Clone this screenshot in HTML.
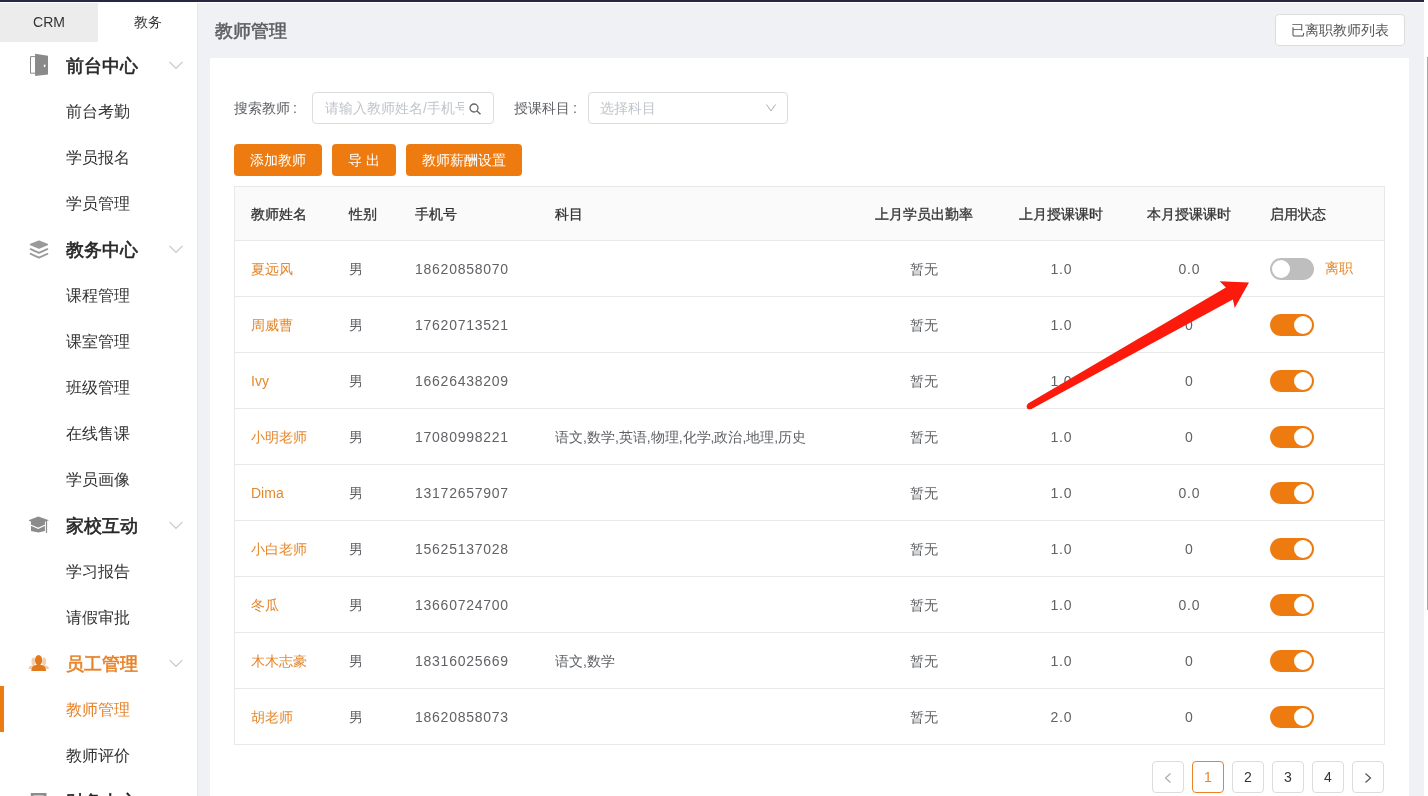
<!DOCTYPE html>
<html><head><meta charset="utf-8"><style>
*{box-sizing:border-box;margin:0;padding:0}
html,body{width:1428px;height:796px;overflow:hidden;background:#f0f1f5;font-family:"Liberation Sans",sans-serif;color:#333}
.a{position:absolute;white-space:nowrap}
.tab{top:3px;height:39px;font-size:14px;line-height:39px;text-align:center}
.grp{left:66px;font-size:18px;font-weight:normal;-webkit-text-stroke:0.6px currentColor;color:#262626;line-height:24px}
.itm{left:66px;font-size:16px;color:#333;line-height:22px}
.hdr{font-size:14px;font-weight:normal;-webkit-text-stroke:0.3px #333;color:#333;line-height:20px;top:204px}
.cell{font-size:14px;color:#606266;line-height:20px}
.nm{color:#e4882e}
.hl{left:235px;width:1149px;height:1px;background:#e8e8e8}
.btn{top:144px;height:32px;background:#ee7b10;border-radius:4px;color:#fff;font-size:14px;line-height:32px;text-align:center}
.tg{left:1270px;width:44px;height:22px;border-radius:11px;background:#ee7b10}
.tg::after{content:"";position:absolute;right:2px;top:2px;width:18px;height:18px;border-radius:50%;background:#fff}
.tg.off{background:#bebebe}
.tg.off::after{right:auto;left:2px}
.pg{top:761px;width:32px;height:32px;border:1px solid #dcdcdc;border-radius:4px;background:#fff;font-size:14px;line-height:30px;text-align:center;color:#333}
</style></head><body>
<div style="position:absolute;left:0;top:0;width:1428px;height:796px;overflow:hidden;will-change:transform">
<div class="a" style="left:0;top:0;width:1424px;height:2px;background:#252840"></div>
<div class="a" style="left:0;top:2px;width:1424px;height:1px;background:#fff"></div>
<div class="a" style="left:0;top:3px;width:198px;height:793px;background:#fff;border-right:1px solid #e8e8ea"></div>
<div class="a tab" style="left:0;width:98px;background:#ececec">CRM</div>
<div class="a tab" style="left:98px;width:99px">教务</div>
<div class="a grp" style="top:54px;color:#262626">前台中心</div>
<svg class="a" style="left:28px;top:53px" width="24" height="24" viewBox="0 0 24 24"><path d="M2.5 3.6 H7.6 V20.2 H2.5 Z" fill="#fff" stroke="#8a8a8a" stroke-width="1"/><path d="M7.1 0.8 L20 2.7 L20 21.6 L7.1 22.9 Z" fill="#8a8a8a"/><ellipse cx="16.6" cy="12.8" rx="0.9" ry="1.4" fill="#fff"/></svg>
<svg class="a" style="left:169px;top:61px" width="14" height="9" viewBox="0 0 14 9"><path d="M0.5 0.8 L7 7.5 L13.5 0.8" fill="none" stroke="#c6c6c6" stroke-width="1.1"/></svg>
<div class="a itm" style="top:101px;color:#333">前台考勤</div>
<div class="a itm" style="top:147px;color:#333">学员报名</div>
<div class="a itm" style="top:193px;color:#333">学员管理</div>
<div class="a grp" style="top:238px;color:#262626">教务中心</div>
<svg class="a" style="left:28px;top:237px" width="24" height="24" viewBox="0 0 24 24"><path d="M2.6 7.6 L11 4.2 L19.3 7.6 L11 11 Z" fill="#9a9a9a" stroke="#9a9a9a" stroke-width="1.6" stroke-linejoin="round"/><path d="M2.6 12.2 Q5 13.2 11 15.9 Q17 13.2 19.4 12.2" fill="none" stroke="#9a9a9a" stroke-width="1.8" stroke-linecap="round" stroke-linejoin="round"/><path d="M2.6 16.9 Q5 17.9 11 20.6 Q17 17.9 19.4 16.9" fill="none" stroke="#9a9a9a" stroke-width="1.8" stroke-linecap="round" stroke-linejoin="round"/></svg>
<svg class="a" style="left:169px;top:245px" width="14" height="9" viewBox="0 0 14 9"><path d="M0.5 0.8 L7 7.5 L13.5 0.8" fill="none" stroke="#c6c6c6" stroke-width="1.1"/></svg>
<div class="a itm" style="top:285px;color:#333">课程管理</div>
<div class="a itm" style="top:331px;color:#333">课室管理</div>
<div class="a itm" style="top:377px;color:#333">班级管理</div>
<div class="a itm" style="top:423px;color:#333">在线售课</div>
<div class="a itm" style="top:469px;color:#333">学员画像</div>
<div class="a grp" style="top:514px;color:#262626">家校互动</div>
<svg class="a" style="left:28px;top:513px" width="24" height="24" viewBox="0 0 24 24"><path d="M0.5 7.3 L10.3 3.6 L20.9 7.3 L16.9 8.8 L16.9 17.9 L10.3 19.6 L3 17.9 L3 8.8 Z" fill="#8c8c8c"/><path d="M3 12.3 L10.3 15.3 L16.9 12.2" fill="none" stroke="#fff" stroke-width="1.1"/><rect x="17.9" y="7.3" width="1.2" height="12.6" fill="#8c8c8c"/></svg>
<svg class="a" style="left:169px;top:521px" width="14" height="9" viewBox="0 0 14 9"><path d="M0.5 0.8 L7 7.5 L13.5 0.8" fill="none" stroke="#c6c6c6" stroke-width="1.1"/></svg>
<div class="a itm" style="top:561px;color:#333">学习报告</div>
<div class="a itm" style="top:607px;color:#333">请假审批</div>
<div class="a grp" style="top:652px;color:#e8832a">员工管理</div>
<svg class="a" style="left:28px;top:651px" width="24" height="24" viewBox="0 0 24 24"><ellipse cx="5.4" cy="10.6" rx="1.9" ry="4" fill="#f3cdb0"/><ellipse cx="16.1" cy="10.6" rx="1.9" ry="4" fill="#f3cdb0"/><path d="M0.3 18.1 Q0.8 14.8 4 14.6 L7 14.6 L7 18.1 Z" fill="#f3cdb0"/><path d="M21.1 18.1 Q20.6 14.8 17.4 14.6 L14.5 14.6 L14.5 18.1 Z" fill="#f3cdb0"/><ellipse cx="10.6" cy="9.2" rx="3.6" ry="5.2" fill="#e07a1c"/><path d="M3.3 19.9 Q3.4 14.6 8 14.1 L13.4 14.1 Q18 14.6 18.1 19.9 Z" fill="#e07a1c"/></svg>
<svg class="a" style="left:169px;top:659px" width="14" height="9" viewBox="0 0 14 9"><path d="M0.5 0.8 L7 7.5 L13.5 0.8" fill="none" stroke="#c6c6c6" stroke-width="1.1"/></svg>
<div class="a itm" style="top:699px;color:#e8832a">教师管理</div>
<div class="a itm" style="top:745px;color:#333">教师评价</div>
<div class="a grp" style="top:790px;color:#262626">财务中心</div>
<svg class="a" style="left:28px;top:789px" width="24" height="24" viewBox="0 0 24 24"><rect x="2.8" y="4" width="15.7" height="14" fill="#8c8c8c"/><rect x="5.5" y="6.5" width="10" height="2" fill="#fff"/></svg>
<svg class="a" style="left:169px;top:797px" width="14" height="9" viewBox="0 0 14 9"><path d="M0.5 0.8 L7 7.5 L13.5 0.8" fill="none" stroke="#c6c6c6" stroke-width="1.1"/></svg>
<div class="a" style="left:0;top:686px;width:4px;height:46px;background:#ec7b10"></div>
<div class="a" style="left:215px;top:18px;font-size:18px;font-weight:normal;-webkit-text-stroke:0.55px #5e5f63;color:#5e5f63;line-height:26px">教师管理</div>
<div class="a" style="left:1275px;top:14px;width:130px;height:32px;border:1px solid #dcdcdc;border-radius:4px;background:#fff;font-size:14px;line-height:31px;text-align:center;color:#555">已离职教师列表</div>
<div class="a" style="left:210px;top:58px;width:1199px;height:738px;background:#fff"></div>
<div class="a" style="left:234px;top:98px;font-size:14px;color:#606266;line-height:20px">搜索教师<span style="margin-left:3px">:</span></div>
<div class="a" style="left:312px;top:92px;width:182px;height:32px;border:1px solid #dcdcdc;border-radius:4px;background:#fff;overflow:hidden"><div class="a" style="left:12px;top:5px;width:139px;overflow:hidden;font-size:14px;line-height:20px;color:#c0c4cc">请输入教师姓名/手机号</div><svg class="a" style="left:156px;top:10px" width="13" height="12" viewBox="0 0 13 12"><circle cx="5" cy="5" r="4" fill="none" stroke="#666" stroke-width="1.3"/><path d="M8 8 L11.5 11.3" stroke="#666" stroke-width="1.4"/></svg></div>
<div class="a" style="left:514px;top:98px;font-size:14px;color:#606266;line-height:20px">授课科目<span style="margin-left:3px">:</span></div>
<div class="a" style="left:588px;top:92px;width:200px;height:32px;border:1px solid #dcdcdc;border-radius:4px;background:#fff"><div class="a" style="left:11px;top:5px;font-size:14px;line-height:20px;color:#c0c4cc">选择科目</div><svg class="a" style="left:177px;top:11px" width="10" height="8" viewBox="0 0 10 8"><path d="M0.5 0.5 L5 7 L9.5 0.5" fill="none" stroke="#aaa" stroke-width="1"/></svg></div>
<div class="a btn" style="left:234px;width:88px">添加教师</div>
<div class="a btn" style="left:332px;width:64px">导 出</div>
<div class="a btn" style="left:406px;width:116px">教师薪酬设置</div>
<div class="a" style="left:234px;top:186px;width:1151px;height:559px;border:1px solid #e8e8e8;background:#fff"></div>
<div class="a" style="left:235px;top:187px;width:1149px;height:53px;background:#fafafa"></div>
<div class="a hl" style="top:240px"></div>
<div class="a hl" style="top:296px"></div>
<div class="a hl" style="top:352px"></div>
<div class="a hl" style="top:408px"></div>
<div class="a hl" style="top:464px"></div>
<div class="a hl" style="top:520px"></div>
<div class="a hl" style="top:576px"></div>
<div class="a hl" style="top:632px"></div>
<div class="a hl" style="top:688px"></div>
<div class="a hl" style="top:744px"></div>
<div class="a hdr" style="left:251px">教师姓名</div>
<div class="a hdr" style="left:349px">性别</div>
<div class="a hdr" style="left:415px">手机号</div>
<div class="a hdr" style="left:555px">科目</div>
<div class="a hdr" style="left:824px;width:200px;text-align:center">上月学员出勤率</div>
<div class="a hdr" style="left:961px;width:200px;text-align:center">上月授课课时</div>
<div class="a hdr" style="left:1089px;width:200px;text-align:center">本月授课课时</div>
<div class="a hdr" style="left:1270px">启用状态</div>
<div class="a cell nm" style="left:251px;top:259px">夏远风</div>
<div class="a cell" style="left:349px;top:259px">男</div>
<div class="a cell" style="left:415px;top:259px;letter-spacing:0.75px">18620858070</div>
<div class="a cell" style="left:824px;width:200px;text-align:center;top:259px">暂无</div>
<div class="a cell" style="left:961px;width:200px;text-align:center;top:259px;letter-spacing:0.7px;text-indent:0.7px">1.0</div>
<div class="a cell" style="left:1089px;width:200px;text-align:center;top:259px;letter-spacing:0.7px;text-indent:0.7px">0.0</div>
<div class="a tg off" style="top:258px"></div>
<div class="a cell nm" style="left:1325px;top:258px">离职</div>
<div class="a cell nm" style="left:251px;top:315px">周威曹</div>
<div class="a cell" style="left:349px;top:315px">男</div>
<div class="a cell" style="left:415px;top:315px;letter-spacing:0.75px">17620713521</div>
<div class="a cell" style="left:824px;width:200px;text-align:center;top:315px">暂无</div>
<div class="a cell" style="left:961px;width:200px;text-align:center;top:315px;letter-spacing:0.7px;text-indent:0.7px">1.0</div>
<div class="a cell" style="left:1089px;width:200px;text-align:center;top:315px;letter-spacing:0.7px;text-indent:0.7px">0</div>
<div class="a tg" style="top:314px"></div>
<div class="a cell nm" style="left:251px;top:371px">Ivy</div>
<div class="a cell" style="left:349px;top:371px">男</div>
<div class="a cell" style="left:415px;top:371px;letter-spacing:0.75px">16626438209</div>
<div class="a cell" style="left:824px;width:200px;text-align:center;top:371px">暂无</div>
<div class="a cell" style="left:961px;width:200px;text-align:center;top:371px;letter-spacing:0.7px;text-indent:0.7px">1.0</div>
<div class="a cell" style="left:1089px;width:200px;text-align:center;top:371px;letter-spacing:0.7px;text-indent:0.7px">0</div>
<div class="a tg" style="top:370px"></div>
<div class="a cell nm" style="left:251px;top:427px">小明老师</div>
<div class="a cell" style="left:349px;top:427px">男</div>
<div class="a cell" style="left:415px;top:427px;letter-spacing:0.75px">17080998221</div>
<div class="a cell" style="left:555px;top:427px">语文,数学,英语,物理,化学,政治,地理,历史</div>
<div class="a cell" style="left:824px;width:200px;text-align:center;top:427px">暂无</div>
<div class="a cell" style="left:961px;width:200px;text-align:center;top:427px;letter-spacing:0.7px;text-indent:0.7px">1.0</div>
<div class="a cell" style="left:1089px;width:200px;text-align:center;top:427px;letter-spacing:0.7px;text-indent:0.7px">0</div>
<div class="a tg" style="top:426px"></div>
<div class="a cell nm" style="left:251px;top:483px">Dima</div>
<div class="a cell" style="left:349px;top:483px">男</div>
<div class="a cell" style="left:415px;top:483px;letter-spacing:0.75px">13172657907</div>
<div class="a cell" style="left:824px;width:200px;text-align:center;top:483px">暂无</div>
<div class="a cell" style="left:961px;width:200px;text-align:center;top:483px;letter-spacing:0.7px;text-indent:0.7px">1.0</div>
<div class="a cell" style="left:1089px;width:200px;text-align:center;top:483px;letter-spacing:0.7px;text-indent:0.7px">0.0</div>
<div class="a tg" style="top:482px"></div>
<div class="a cell nm" style="left:251px;top:539px">小白老师</div>
<div class="a cell" style="left:349px;top:539px">男</div>
<div class="a cell" style="left:415px;top:539px;letter-spacing:0.75px">15625137028</div>
<div class="a cell" style="left:824px;width:200px;text-align:center;top:539px">暂无</div>
<div class="a cell" style="left:961px;width:200px;text-align:center;top:539px;letter-spacing:0.7px;text-indent:0.7px">1.0</div>
<div class="a cell" style="left:1089px;width:200px;text-align:center;top:539px;letter-spacing:0.7px;text-indent:0.7px">0</div>
<div class="a tg" style="top:538px"></div>
<div class="a cell nm" style="left:251px;top:595px">冬瓜</div>
<div class="a cell" style="left:349px;top:595px">男</div>
<div class="a cell" style="left:415px;top:595px;letter-spacing:0.75px">13660724700</div>
<div class="a cell" style="left:824px;width:200px;text-align:center;top:595px">暂无</div>
<div class="a cell" style="left:961px;width:200px;text-align:center;top:595px;letter-spacing:0.7px;text-indent:0.7px">1.0</div>
<div class="a cell" style="left:1089px;width:200px;text-align:center;top:595px;letter-spacing:0.7px;text-indent:0.7px">0.0</div>
<div class="a tg" style="top:594px"></div>
<div class="a cell nm" style="left:251px;top:651px">木木志豪</div>
<div class="a cell" style="left:349px;top:651px">男</div>
<div class="a cell" style="left:415px;top:651px;letter-spacing:0.75px">18316025669</div>
<div class="a cell" style="left:555px;top:651px">语文,数学</div>
<div class="a cell" style="left:824px;width:200px;text-align:center;top:651px">暂无</div>
<div class="a cell" style="left:961px;width:200px;text-align:center;top:651px;letter-spacing:0.7px;text-indent:0.7px">1.0</div>
<div class="a cell" style="left:1089px;width:200px;text-align:center;top:651px;letter-spacing:0.7px;text-indent:0.7px">0</div>
<div class="a tg" style="top:650px"></div>
<div class="a cell nm" style="left:251px;top:707px">胡老师</div>
<div class="a cell" style="left:349px;top:707px">男</div>
<div class="a cell" style="left:415px;top:707px;letter-spacing:0.75px">18620858073</div>
<div class="a cell" style="left:824px;width:200px;text-align:center;top:707px">暂无</div>
<div class="a cell" style="left:961px;width:200px;text-align:center;top:707px;letter-spacing:0.7px;text-indent:0.7px">2.0</div>
<div class="a cell" style="left:1089px;width:200px;text-align:center;top:707px;letter-spacing:0.7px;text-indent:0.7px">0</div>
<div class="a tg" style="top:706px"></div>
<div class="a pg" style="left:1152px"><svg class="a" style="left:11px;top:11px" width="8" height="10" viewBox="0 0 8 10"><path d="M6.5 0.5 L1.5 5 L6.5 9.5" fill="none" stroke="#a8a8a8" stroke-width="1.1"/></svg></div>
<div class="a pg" style="left:1192px;border-color:#e8832a;color:#e8832a">1</div>
<div class="a pg" style="left:1232px">2</div>
<div class="a pg" style="left:1272px">3</div>
<div class="a pg" style="left:1312px">4</div>
<div class="a pg" style="left:1352px"><svg class="a" style="left:11px;top:11px" width="8" height="10" viewBox="0 0 8 10"><path d="M1.5 0.5 L6.5 5 L1.5 9.5" fill="none" stroke="#555" stroke-width="1.2"/></svg></div>
<svg class="a" style="left:0;top:0" width="1428" height="796" viewBox="0 0 1428 796"><path d="M1028 403.6 L1225.9 287.5 L1219.6 281.3 L1249 282.5 L1234.7 307.9 L1232.9 299.4 L1031 409.2 Z" fill="#fc1a0c"/><circle cx="1029.6" cy="406.4" r="2.9" fill="#fc1a0c"/></svg>
<div class="a" style="left:1424px;top:0;width:4px;height:796px;background:#fff"></div>
<div class="a" style="left:1427px;top:57px;width:1px;height:553px;background:#a8a8a8"></div>
</div>
</body></html>
